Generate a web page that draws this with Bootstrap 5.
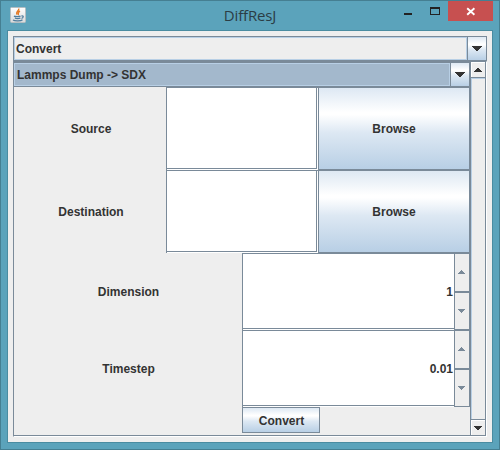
<!DOCTYPE html>
<html lang="en">
<head>
<meta charset="utf-8">
<title>DiffResJ</title>
<link href="https://cdn.jsdelivr.net/npm/bootstrap@5.3.0/dist/css/bootstrap.min.css" rel="stylesheet">
<style>
:root{--edge:#7a8a99;--pale:#b8cfe5;--face:#eee}
html,body{height:100%;overflow:hidden}
body{font:bold 12px/16px "Liberation Sans",Arial,sans-serif;color:#333}
svg{display:block;flex:none}
button{font:inherit;color:inherit;padding:0;border-radius:0}
.frame{width:500px;height:450px;background:#5ba3bb;border:1px solid #457f92;padding:0 6px 6px}
.titlebar{height:29px;flex:none}
.java{margin:6px 0 0 3px}
.app-title{font:15px/20px "Open Sans","Noto Sans",sans-serif;letter-spacing:-.15px;color:#2b3d45;margin-top:4px}
.title-side{width:112px;flex:none}
.closer{width:45px;height:20px;background:#c75050}
.client{background:var(--face);border:1px solid #4a8ca1;padding:5px}
.combo{border:1px solid var(--edge);height:25px;background:var(--face)}
.combo-text{border:1px solid var(--pale);padding-left:1px;line-height:22px}
.metal{background:linear-gradient(#dde8f3 0%,#fff 30%,#fff 33%,#dde8f3 55%,#b8cfe5 100%);border:1px solid var(--edge)}
.combo .metal{width:19px;border-width:0 0 0 1px}
.pane{border:1px solid var(--edge);border-right-color:#fff;border-bottom-color:#fff;height:376px}
.pane-inner{border:solid var(--edge);border-width:0 1px 1px 0}
.view{width:456px}
.kind{background:#a3b8cc;border-width:1px 1px 1px 0}
.kind .combo-text{padding-left:2px}
.file-row{height:83px}
.file-row>*{width:152px}
.caption{padding-left:2px}
.num-row .caption{padding-left:1px}
.entry{background:#fff;border:1px solid var(--edge)}
.file-row .entry{border-right:0;border-bottom:0}
.file-row .entry::after{content:"";flex:1;margin:0 1px 1px 0;border:solid var(--edge);border-width:0 1px 1px 0}
.num-row{height:77px}
.num-row>*{width:228px}
.num{background:#fff;border:solid var(--edge);border-width:1px 0 0 1px}
.num-text{border-bottom:1px solid var(--edge);margin-bottom:1px;padding:2px 1px 0 0}
.steps{width:16px;background:var(--face);border:solid var(--edge);border-width:0 1px 1px 1px}
.steps>*:first-child{border-bottom:2px solid var(--edge);height:39px;padding-bottom:2px}
.steps>*:last-child{padding-bottom:1px}
.go{width:78px;height:26px;margin-left:228px;padding:1px 0 0 1px}
.bar{width:16px;background:var(--face);border-left:1px solid var(--edge)}
.bar-btn{height:16px;border:1px solid var(--edge);border-width:0 0 1px;box-shadow:inset 1px 1px #fff}
.bar-btn.down{border-width:1px 0 0}
.track{border-left:1px solid var(--pale);border-top:1px solid var(--pale)}
</style>
</head>
<body>
<div class="frame d-flex flex-column">
  <header class="titlebar d-flex justify-content-between">
    <div class="title-side">
      <svg class="java" width="16" height="16" viewBox="0 0 16 16"><defs><linearGradient id="tile" x2="0" y2="1"><stop stop-color="#fff"/><stop offset="1" stop-color="#d8dadb"/></linearGradient></defs><rect x=".5" y=".5" width="15" height="15" rx="1" fill="url(#tile)" stroke="#b5bec2"/><path d="M8.7 1.5c1 2-3.7 3.4-1.5 6M10 4c-3 1.5-.8 2.4-2 4" fill="none" stroke="#e57a24" stroke-width="1.4"/><path d="M4 9.1c1 .7 5 .7 6.5 0M5 11c1 .7 4 .7 5.5 0M3 13c2 1.2 8 1 9.5-.3M11.5 9c2.5-.7 2 2 0 2.3" fill="none" stroke="#4f7d9d" stroke-width="1.3"/></svg>
    </div>
    <div class="app-title">DiffResJ</div>
    <div class="title-side d-flex justify-content-end">
      <svg width="67" height="28"><path d="M23 12h8v2h-8z" fill="#222"/><path d="M49 6h10v8H49z" fill="#222"/><path d="M50 8h8v5h-8z" fill="#5ba3bb"/></svg>
      <div class="closer d-flex justify-content-center"><svg width="45" height="20"><path d="M19.2 7.2l7.2 6.6m0-6.6l-7.2 6.6" stroke="#fff" stroke-width="1.9"/></svg></div>
    </div>
  </header>
  <main class="client flex-fill d-flex flex-column">
    <div class="combo d-flex flex-shrink-0">
      <div class="combo-text flex-fill">Convert</div>
      <div class="metal d-flex align-items-center justify-content-center"><svg width="10" height="5" shape-rendering="crispEdges"><path d="M0 0h10v1h-1v1h-1v1h-1v1h-1v1h-2v-1h-1v-1h-1v-1h-1v-1h-1z" fill="#333"/></svg></div>
    </div>
    <div class="pane">
      <div class="pane-inner d-flex h-100">
        <div class="view">
          <div class="combo kind d-flex">
            <div class="combo-text flex-fill">Lammps Dump -&gt; SDX</div>
            <div class="metal d-flex align-items-center justify-content-center"><svg width="10" height="5" shape-rendering="crispEdges"><path d="M0 0h10v1h-1v1h-1v1h-1v1h-1v1h-2v-1h-1v-1h-1v-1h-1v-1h-1z" fill="#333"/></svg></div>
          </div>
          <div class="file-row d-flex">
            <div class="caption d-flex align-items-center justify-content-center">Source</div>
            <div class="entry d-flex"></div>
            <button class="metal">Browse</button>
          </div>
          <div class="file-row d-flex">
            <div class="caption d-flex align-items-center justify-content-center">Destination</div>
            <div class="entry d-flex"></div>
            <button class="metal">Browse</button>
          </div>
          <div class="num-row d-flex">
            <div class="caption d-flex align-items-center justify-content-center">Dimension</div>
            <div class="num d-flex">
              <div class="num-text flex-fill d-flex align-items-center justify-content-end">1</div>
              <div class="steps d-flex flex-column">
                <div class="d-flex align-items-center justify-content-center"><svg width="8" height="4" shape-rendering="crispEdges"><path d="M0 4h7v-1h-1v-1h-1v-1h-1v-1h-1v1h-1v1h-1v1h-1z" fill="#7a8a99"/></svg></div>
                <div class="flex-fill d-flex align-items-center justify-content-center"><svg width="8" height="4" shape-rendering="crispEdges"><path d="M0 0h7v1h-1v1h-1v1h-1v1h-1v-1h-1v-1h-1v-1h-1z" fill="#7a8a99"/></svg></div>
              </div>
            </div>
          </div>
          <div class="num-row d-flex">
            <div class="caption d-flex align-items-center justify-content-center">Timestep</div>
            <div class="num d-flex">
              <div class="num-text flex-fill d-flex align-items-center justify-content-end">0.01</div>
              <div class="steps d-flex flex-column">
                <div class="d-flex align-items-center justify-content-center"><svg width="8" height="4" shape-rendering="crispEdges"><path d="M0 4h7v-1h-1v-1h-1v-1h-1v-1h-1v1h-1v1h-1v1h-1z" fill="#7a8a99"/></svg></div>
                <div class="flex-fill d-flex align-items-center justify-content-center"><svg width="8" height="4" shape-rendering="crispEdges"><path d="M0 0h7v1h-1v1h-1v1h-1v1h-1v-1h-1v-1h-1v-1h-1z" fill="#7a8a99"/></svg></div>
              </div>
            </div>
          </div>
          <button class="metal go d-block">Convert</button>
        </div>
        <div class="bar d-flex flex-column">
          <div class="bar-btn d-flex align-items-center justify-content-center"><svg width="8" height="4" shape-rendering="crispEdges"><path d="M0 4h8v-1h-1v-1h-1v-1h-1v-1h-2v1h-1v1h-1v1h-1z" fill="#333"/></svg></div>
          <div class="track flex-fill"></div>
          <div class="bar-btn down d-flex align-items-center justify-content-center"><svg width="8" height="4" shape-rendering="crispEdges"><path d="M0 0h8v1h-1v1h-1v1h-1v1h-2v-1h-1v-1h-1v-1h-1z" fill="#333"/></svg></div>
        </div>
      </div>
    </div>
  </main>
</div>
<script src="https://cdn.jsdelivr.net/npm/bootstrap@5.3.0/dist/js/bootstrap.bundle.min.js"></script>
</body>
</html>
